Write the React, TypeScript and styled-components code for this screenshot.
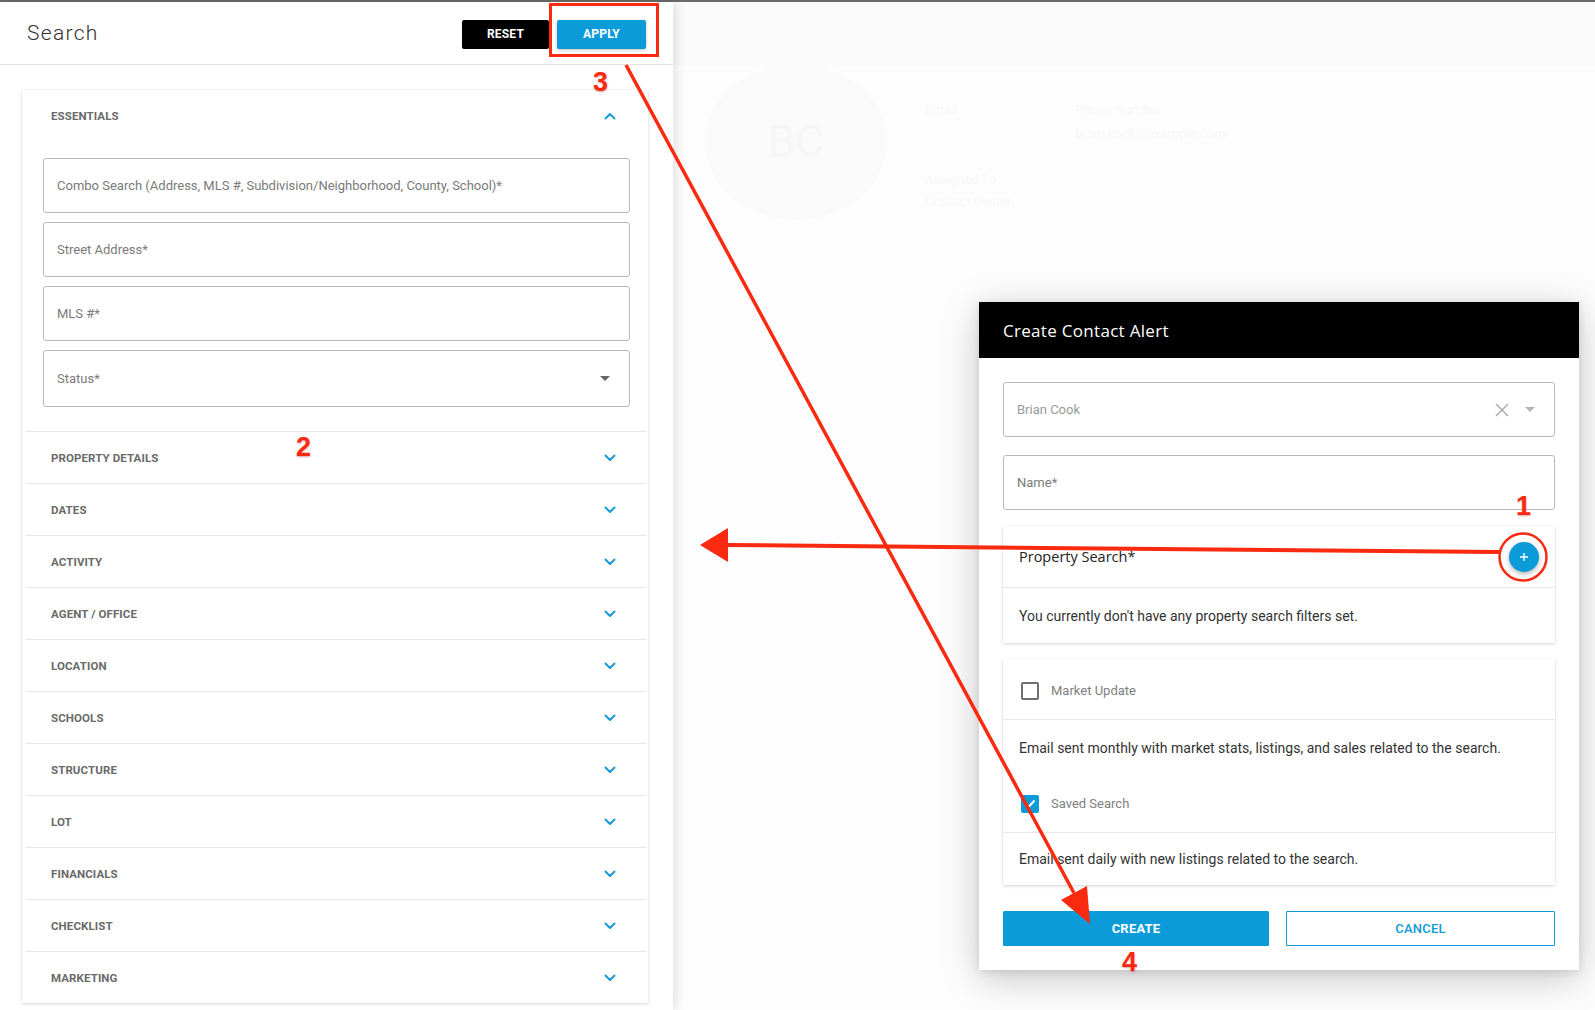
import React from 'react';
import styled, { createGlobalStyle } from 'styled-components';

const Global = createGlobalStyle`
  html, body { margin: 0; padding: 0; background: #fcfcfc; }
  body { font-family: Roboto, "Liberation Sans", Arial, sans-serif; -webkit-font-smoothing: antialiased; }
  * { box-sizing: border-box; }
`;

const BLUE = '#0c9bd9';
const RED = '#fa2a10';

const Page = styled.div`
  position: relative;
  width: 1595px;
  height: 1010px;
  overflow: hidden;
  display: flex;
  flex-direction: column;
  background: #fcfcfc;
`;

const TopLine = styled.div`
  flex: none;
  height: 2px;
  background: #6a6a6a;
`;

const Main = styled.div`
  flex: 1;
  display: flex;
  min-height: 0;
`;

const Panel = styled.aside`
  flex: none;
  width: 673px;
  background: #fff;
  display: flex;
  flex-direction: column;
  box-shadow: 2px 0 12px rgba(0, 0, 0, 0.13);
  position: relative;
  z-index: 1;
`;

const PanelHeader = styled.header`
  flex: none;
  height: 63px;
  border-bottom: 1px solid #e3e3e3;
  display: flex;
  align-items: center;
  justify-content: space-between;
  padding: 0 27px 0 27px;
`;

const PanelTitle = styled.h1`
  margin: 0;
  font-family: Roboto, sans-serif;
  font-weight: 300;
  font-size: 21px;
  letter-spacing: 1.3px;
  color: #333;
`;

const HeaderActions = styled.div`
  display: flex;
  gap: 8px;
  padding-top: 2px;
`;

const HeaderButton = styled.button<{ $variant: 'dark' | 'blue'; $w: number }>`
  width: ${(p) => p.$w}px;
  height: 29px;
  border: none;
  border-radius: 2px;
  background: ${(p) => (p.$variant === 'dark' ? '#000' : BLUE)};
  color: #fff;
  font-family: Roboto, sans-serif;
  font-weight: 700;
  font-size: 12px;
  letter-spacing: 0.2px;
  box-shadow: ${(p) => (p.$variant === 'blue' ? '0 1px 3px rgba(0,0,0,0.25)' : 'none')};
`;

const PanelBody = styled.div`
  flex: 1;
  padding: 25px 25px 0 22px;
`;

const Card = styled.section`
  background: #fff;
  box-shadow: 0 1px 3px rgba(0, 0, 0, 0.16), 0 0 1px rgba(0, 0, 0, 0.08);
`;

const SectionHeader = styled.div`
  height: 52px;
  display: flex;
  align-items: center;
  justify-content: space-between;
  padding: 0 32px 0 29px;
`;

const RowLabel = styled.span`
  font-family: Roboto, sans-serif;
  font-weight: 700;
  font-size: 11.5px;
  color: #6a6a6a;
  letter-spacing: 0.1px;
`;

const Fields = styled.div`
  display: flex;
  flex-direction: column;
  gap: 9px;
  padding: 16px 18px 24px 21px;
`;

const Field = styled.div<{ $h?: number; $pr?: number }>`
  height: ${(p) => p.$h ?? 55}px;
  border: 1px solid #b9b9b9;
  border-radius: 3px;
  display: flex;
  align-items: center;
  justify-content: space-between;
  padding: 0 ${(p) => p.$pr ?? 19}px 0 13px;
  background: #fff;
`;

const Placeholder = styled.span<{ $light?: boolean }>`
  font-family: Roboto, sans-serif;
  font-size: 13px;
  color: ${(p) => (p.$light ? '#9a9a9a' : '#7a7a7a')};
`;

const AccordionRow = styled.div`
  height: 52px;
  margin: 0 2px 0 4px;
  border-top: 1px solid #e6e6e6;
  display: flex;
  align-items: center;
  justify-content: space-between;
  padding: 0 30px 0 25px;
`;

const RightArea = styled.div`
  flex: 1;
  position: relative;
  background: #fdfdfd;
`;

const GhostBar = styled.div`
  height: 63px;
  background: #fafafa;
`;

const GhostAvatar = styled.div`
  position: absolute;
  left: 32px;
  top: 62px;
  width: 182px;
  height: 156px;
  border-radius: 50%;
  background: #fafafa;
  display: flex;
  align-items: center;
  justify-content: center;
  font-family: Roboto, sans-serif;
  font-size: 44px;
  color: #f6f6f6;
`;

const GhostText = styled.div<{ $x: number; $y: number }>`
  position: absolute;
  left: ${(p) => p.$x}px;
  top: ${(p) => p.$y}px;
  font-family: Roboto, sans-serif;
  font-size: 13px;
  color: #f8f8f8;
`;

const Modal = styled.div`
  position: absolute;
  left: 979px;
  top: 302px;
  width: 600px;
  background: #fff;
  box-shadow: 0 8px 36px rgba(0, 0, 0, 0.22), 0 2px 8px rgba(0, 0, 0, 0.1);
  z-index: 2;
`;

const ModalHeader = styled.div`
  height: 56px;
  background: #000;
  display: flex;
  align-items: center;
  padding: 0 24px;
  font-family: "Open Sans", sans-serif;
  font-weight: 500;
  font-size: 17px;
  color: #fff;
  letter-spacing: 0.3px;
`;

const ModalBody = styled.div`
  padding: 24px;
  display: flex;
  flex-direction: column;
`;

const ModalFields = styled.div`
  display: flex;
  flex-direction: column;
  gap: 18px;
`;

const IconGroup = styled.div`
  display: flex;
  align-items: center;
  gap: 16px;
`;

const InnerCard = styled.div<{ $mt: number }>`
  margin-top: ${(p) => p.$mt}px;
  background: #fff;
  box-shadow: 0 1px 3px rgba(0, 0, 0, 0.17), 0 0 1px rgba(0, 0, 0, 0.06);
`;

const CardHead = styled.div`
  height: 62px;
  border-bottom: 1px solid #e8e8e8;
  display: flex;
  align-items: center;
  justify-content: space-between;
  padding: 0 16px;
`;

const CardTitle = styled.span`
  font-family: "Open Sans", sans-serif;
  font-size: 14.5px;
  color: #222;
`;

const PlusButton = styled.button`
  width: 30px;
  height: 30px;
  border-radius: 50%;
  border: none;
  background: ${BLUE};
  color: #fff;
  display: flex;
  align-items: center;
  justify-content: center;
  padding: 0;
  box-shadow: 0 2px 5px rgba(0, 0, 0, 0.3);
`;

const CardText = styled.div<{ $h: number }>`
  height: ${(p) => p.$h}px;
  display: flex;
  align-items: center;
  padding: 0 16px;
  font-family: Roboto, sans-serif;
  font-size: 14px;
  color: #333;
`;

const CheckRow = styled.label<{ $h: number; $pt?: number }>`
  height: ${(p) => p.$h}px;
  border-bottom: 1px solid #e8e8e8;
  display: flex;
  align-items: center;
  gap: 12px;
  padding: ${(p) => p.$pt ?? 0}px 18px 0;
  font-family: Roboto, sans-serif;
  font-size: 13px;
  color: #808080;
`;

const Box = styled.span<{ $checked?: boolean }>`
  width: 18px;
  height: 18px;
  border-radius: 2px;
  border: 2px solid ${(p) => (p.$checked ? BLUE : '#6f6f6f')};
  background: ${(p) => (p.$checked ? BLUE : '#fff')};
  display: flex;
  align-items: center;
  justify-content: center;
`;

const Actions = styled.div`
  margin-top: 26px;
  display: grid;
  grid-template-columns: 266px 1fr;
  gap: 17px;
`;

const ActionButton = styled.button<{ $primary?: boolean }>`
  height: 35px;
  border-radius: 1px;
  border: 1px solid ${BLUE};
  background: ${(p) => (p.$primary ? BLUE : '#fff')};
  color: ${(p) => (p.$primary ? '#fff' : BLUE)};
  font-family: Roboto, sans-serif;
  font-weight: ${(p) => (p.$primary ? 700 : 500)};
  font-size: 13px;
  letter-spacing: 0.2px;
`;

const Overlay = styled.svg`
  position: absolute;
  left: 0;
  top: 0;
  pointer-events: none;
  z-index: 10;
`;

const Marker = styled.span<{ $x: number; $y: number }>`
  position: absolute;
  left: ${(p) => p.$x}px;
  top: ${(p) => p.$y}px;
  font-family: "Liberation Sans", Arial, sans-serif;
  font-weight: 700;
  font-size: 27px;
  line-height: 27px;
  color: ${RED};
  text-shadow: 0 1px 2px rgba(120, 0, 0, 0.35);
  z-index: 11;
  pointer-events: none;
`;

const Chevron = ({ up }: { up?: boolean }) => (
  <svg width="12" height="8" viewBox="0 0 12 8">
    <path
      d={up ? 'M1.5 6.5 L6 2 L10.5 6.5' : 'M1.5 1.5 L6 6 L10.5 1.5'}
      fill="none"
      stroke="#1a9ad6"
      strokeWidth="2"
      strokeLinecap="round"
      strokeLinejoin="round"
    />
  </svg>
);

const Caret = ({ color = '#666' }: { color?: string }) => (
  <svg width="10" height="5" viewBox="0 0 10 5">
    <path d="M0 0 L10 0 L5 5 Z" fill={color} />
  </svg>
);

const sections = [
  'PROPERTY DETAILS',
  'DATES',
  'ACTIVITY',
  'AGENT / OFFICE',
  'LOCATION',
  'SCHOOLS',
  'STRUCTURE',
  'LOT',
  'FINANCIALS',
  'CHECKLIST',
  'MARKETING',
];

export default function App() {
  return (
    <>
      <Global />
      <Page>
        <TopLine />
        <Main>
          <Panel>
            <PanelHeader>
              <PanelTitle>Search</PanelTitle>
              <HeaderActions>
                <HeaderButton $variant="dark" $w={87}>RESET</HeaderButton>
                <HeaderButton $variant="blue" $w={89}>APPLY</HeaderButton>
              </HeaderActions>
            </PanelHeader>
            <PanelBody>
              <Card>
                <SectionHeader>
                  <RowLabel>ESSENTIALS</RowLabel>
                  <Chevron up />
                </SectionHeader>
                <Fields>
                  <Field>
                    <Placeholder>Combo Search (Address, MLS #, Subdivision/Neighborhood, County, School)*</Placeholder>
                  </Field>
                  <Field>
                    <Placeholder>Street Address*</Placeholder>
                  </Field>
                  <Field>
                    <Placeholder>MLS #*</Placeholder>
                  </Field>
                  <Field $h={57}>
                    <Placeholder>Status*</Placeholder>
                    <Caret />
                  </Field>
                </Fields>
                {sections.map((s) => (
                  <AccordionRow key={s}>
                    <RowLabel>{s}</RowLabel>
                    <Chevron />
                  </AccordionRow>
                ))}
              </Card>
            </PanelBody>
          </Panel>
          <RightArea>
            <GhostBar />
            <GhostAvatar>BC</GhostAvatar>
            <GhostText $x={252} $y={100}>Email</GhostText>
            <GhostText $x={402} $y={100}>Phone Number</GhostText>
            <GhostText $x={402} $y={124}>brian.cook@example.com</GhostText>
            <GhostText $x={252} $y={170}>Assigned To</GhostText>
            <GhostText $x={252} $y={192}>Contact Owner</GhostText>
          </RightArea>
        </Main>

        <Modal>
          <ModalHeader>Create Contact Alert</ModalHeader>
          <ModalBody>
            <ModalFields>
              <Field $pr={19}>
                <Placeholder $light>Brian Cook</Placeholder>
                <IconGroup>
                  <svg width="14" height="14" viewBox="0 0 14 14">
                    <path d="M1 1 L13 13 M13 1 L1 13" stroke="#b0b0b0" strokeWidth="1.6" />
                  </svg>
                  <Caret color="#b5b5b5" />
                </IconGroup>
              </Field>
              <Field>
                <Placeholder>Name*</Placeholder>
              </Field>
            </ModalFields>

            <InnerCard $mt={16}>
              <CardHead>
                <CardTitle>Property Search*</CardTitle>
                <PlusButton aria-label="Add property search">
                  <svg width="10" height="10" viewBox="0 0 10 10">
                    <path d="M5 1 V9 M1 5 H9" stroke="#fff" strokeWidth="1.4" />
                  </svg>
                </PlusButton>
              </CardHead>
              <CardText $h={55}>You currently don't have any property search filters set.</CardText>
            </InnerCard>

            <InnerCard $mt={16}>
              <CheckRow $h={61} $pt={3}>
                <Box />
                Market Update
              </CheckRow>
              <CardText $h={55}>Email sent monthly with market stats, listings, and sales related to the search.</CardText>
              <CheckRow $h={58}>
                <Box $checked>
                  <svg width="12" height="10" viewBox="0 0 12 10">
                    <path d="M1.5 5 L4.5 8 L10.5 1.5" fill="none" stroke="#fff" strokeWidth="2" />
                  </svg>
                </Box>
                Saved Search
              </CheckRow>
              <CardText $h={52}>Email sent daily with new listings related to the search.</CardText>
            </InnerCard>

            <Actions>
              <ActionButton $primary>CREATE</ActionButton>
              <ActionButton>CANCEL</ActionButton>
            </Actions>
          </ModalBody>
        </Modal>

        <Overlay width="1595" height="1010" viewBox="0 0 1595 1010">
          <rect x="550.5" y="4.5" width="107" height="51" fill="none" stroke={RED} strokeWidth="3" />
          <circle cx="1523" cy="557" r="23.5" fill="none" stroke={RED} strokeWidth="2.5" />
          <line x1="626" y1="65" x2="1074" y2="893" stroke={RED} strokeWidth="3.5" />
          <polygon points="1090,924 1061,900 1087,886" fill={RED} />
          <line x1="1499" y1="552" x2="726" y2="545" stroke={RED} strokeWidth="4" />
          <polygon points="700,545 728,528 728,562" fill={RED} />
        </Overlay>
        <Marker $x={593} $y={69}>3</Marker>
        <Marker $x={296} $y={434}>2</Marker>
        <Marker $x={1516} $y={493}>1</Marker>
        <Marker $x={1122} $y={949}>4</Marker>
      </Page>
    </>
  );
}
